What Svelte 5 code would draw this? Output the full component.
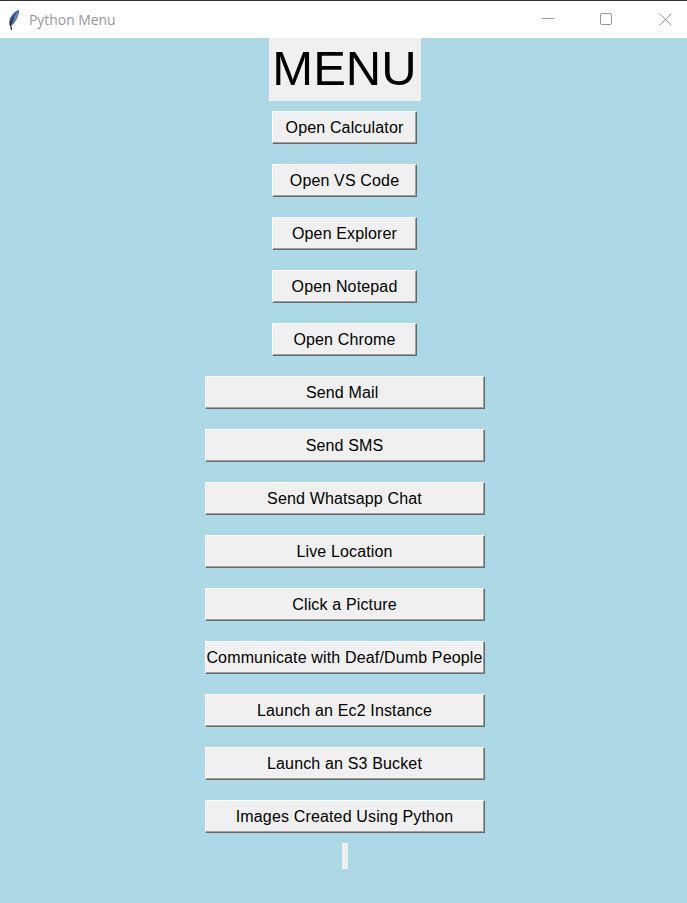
<script>
    const shortButtons = ["Open Calculator", "Open VS Code", "Open Explorer", "Open Notepad", "Open Chrome"];
    const wideButtons = [
        "Send Mail ",
        "Send SMS",
        "Send Whatsapp Chat",
        "Live Location",
        "Click a Picture",
        "Communicate with Deaf/Dumb People",
        "Launch an Ec2 Instance",
        "Launch an S3 Bucket",
        "Images Created Using Python",
    ];
</script>

<div class="window">
    <header class="titlebar">
        <svg class="feather" width="12" height="22" viewBox="0 0 12 22">
            <path d="M11 1 C7 2 3 6 1.500 11 C1 13 1 15 2 17 C5 16 8 12 9.500 8 C10.500 6 11.500 3 11 1 Z" fill="#3d5f94" />
            <path d="M10.500 2 C8.500 4 7 6.500 5.500 10 L3.500 14 C6 13 8 10 9 7 C10 5 10.500 3.500 10.500 2 Z" fill="#6d8fc8" />
            <path d="M6 8 L2.500 15 L3.500 21" fill="none" stroke="#20242c" stroke-width="1.200" />
        </svg>
        <span class="title">Python Menu</span>
        <div class="controls">
            <svg width="13" height="13" viewBox="0 0 13 13">
                <path d="M0 5.500 H12" stroke="#999" stroke-width="1" />
            </svg>
            <svg width="13" height="13" viewBox="0 0 13 13">
                <rect x="0.500" y="0.500" width="11" height="11" rx="1.500" fill="none" stroke="#999" stroke-width="1" />
            </svg>
            <svg class="close" width="13" height="13" viewBox="0 0 13 13">
                <path d="M0.500 0.500 L12.500 12.500 M12.500 0.500 L0.500 12.500" stroke="#999" stroke-width="1" />
            </svg>
        </div>
    </header>

    <main class="content">
        <div class="heading">MENU</div>
        {#each shortButtons as label}
            <button class="short">{label}</button>
        {/each}
        {#each wideButtons as label}
            <button class="wide">{label}</button>
        {/each}
        <div class="empty-label"></div>
    </main>
</div>

<style>
    :global(body) {
        margin: 0;
        background-color: #add8e6;
    }

    .window {
        width: 687px;
        height: 903px;
        overflow: hidden;
        display: flex;
        flex-direction: column;
        font-family: "Liberation Sans", Arial, sans-serif;
    }

    .titlebar {
        height: 37px;
        flex-shrink: 0;
        border-top: 1px solid #333;
        background-color: #fff;
        display: flex;
        align-items: center;
        padding-left: 8px;
    }

    .feather {
        margin-right: 9px;
    }

    .title {
        font-family: "Open Sans", "Noto Sans", sans-serif;
        font-size: 13.900px;
        color: #999;
    }

    .controls {
        margin-left: auto;
        display: flex;
        gap: 45px;
        padding-right: 15px;
    }

    .close {
        margin-left: 1px;
    }

    .content {
        flex: 1;
        background-color: #add8e6;
        display: flex;
        flex-direction: column;
        align-items: center;
        gap: 20px;
        padding-left: 2px;
    }

    .heading {
        width: 152px;
        height: 63px;
        margin-bottom: -10px;
        background-color: #f0f0f0;
        color: #000;
        font-size: 49px;
        line-height: 61px;
        text-align: center;
    }

    button {
        height: 33px;
        padding: 0;
        box-sizing: border-box;
        background-color: #f0f0f0;
        color: #000;
        font-family: inherit;
        font-size: 16px;
        letter-spacing: 0.150px;
        white-space: pre;
        border: 1px solid;
        border-color: #fff #696969 #696969 #fff;
        box-shadow: inset -1px -1px 0 #a0a0a0;
        border-radius: 0;
    }

    .short {
        width: 145px;
    }

    .wide {
        width: 280px;
    }

    .empty-label {
        width: 6px;
        height: 26px;
        margin-top: -10px;
        background-color: #f0f0f0;
    }
</style>
